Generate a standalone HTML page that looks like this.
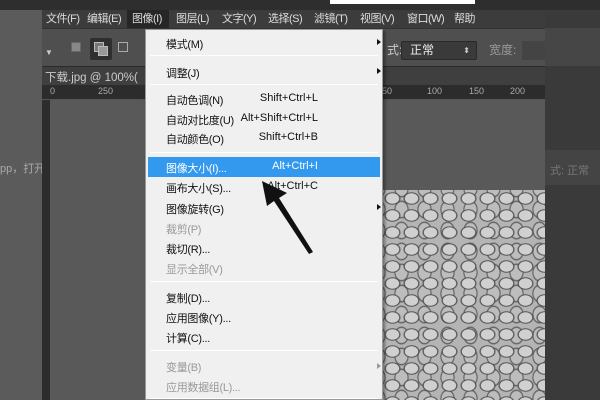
<!DOCTYPE html><html><head><meta charset="utf-8"><style>
body{margin:0;width:600px;height:400px;overflow:hidden;background:#4a4a4a;position:relative;font-family:"Liberation Sans","Noto Sans CJK SC",sans-serif;}
div{position:absolute;box-sizing:border-box}
.mi{position:absolute;left:20px;font-size:11px;color:#111;white-space:nowrap;letter-spacing:-0.3px}
.sc{position:absolute;right:64px;font-size:11px;color:#111;text-align:right;white-space:nowrap}
.dis{color:#999}
.sep{position:absolute;left:4px;right:4px;height:1px;background:#bdbdbd;border-bottom:1px solid #fff}
.ar{position:absolute;left:231px;width:0;height:0;border-left:4px solid #111;border-top:3.5px solid transparent;border-bottom:3.5px solid transparent}
.mb span{position:absolute;letter-spacing:-0.5px}
</style></head><body>
<div style="left:0;top:0;width:600px;height:10px;background:#2e2e2e"></div>
<div style="left:330px;top:0;width:145px;height:4px;background:#fff"></div>
<div style="left:0;top:10px;width:42px;height:390px;background:#5b5b5b"></div>
<div style="left:0;top:160px;font-size:11px;color:#aaa">pp，打开</div>
<div style="left:545px;top:10px;width:55px;height:390px;background:#3a3a3a"></div>
<div style="left:545px;top:28px;width:55px;height:38px;background:#464646"></div>
<div style="left:545px;top:150px;width:55px;height:35px;background:#444"></div>
<div style="left:550px;top:162px;font-size:11px;color:#777">式: 正常</div>
<div class="mb" style="left:42px;top:10px;width:503px;height:18px;background:#3c3c3c;color:#ddd;font-size:11px;line-height:18px">
<span style="left:4px">文件(F)</span><span style="left:45px">编辑(E)</span>
<span style="left:85px;top:0;width:42px;height:18px;background:#262626"></span><span style="left:90px">图像(I)</span>
<span style="left:134px">图层(L)</span><span style="left:180px">文字(Y)</span><span style="left:226px">选择(S)</span><span style="left:272px">滤镜(T)</span><span style="left:318px">视图(V)</span><span style="left:365px">窗口(W)</span><span style="left:412px">帮助</span></div>
<div style="left:42px;top:28px;width:503px;height:38px;background:#4f4f4f;border-top:1px solid #333"></div>
<div style="left:45px;top:48px;color:#ccc;font-size:8px">▼</div>
<div style="left:71px;top:42px;width:10px;height:10px;background:#888;border:1px solid #666"></div>
<div style="left:90px;top:38px;width:22px;height:22px;background:#2f2f2f;border-radius:2px"></div>
<div style="left:94px;top:42px;width:10px;height:10px;border:1px solid #bbb;background:#777"></div>
<div style="left:98px;top:46px;width:10px;height:10px;border:1px solid #bbb;background:#999"></div>
<div style="left:118px;top:42px;width:10px;height:10px;border:1px solid #aaa"></div>
<div style="left:387px;top:41px;font-size:12px;color:#ccc">式:</div>
<div style="left:401px;top:41px;width:76px;height:19px;background:#3a3a3a;border:1px solid #2a2a2a;border-radius:2px;color:#eee;font-size:12px;line-height:17px;padding-left:8px">正常<span style="position:absolute;right:6px;font-size:8px;color:#ccc">⬍</span></div>
<div style="left:489px;top:41px;font-size:12px;color:#999">宽度:</div>
<div style="left:522px;top:41px;width:23px;height:19px;background:#444"></div>
<div style="left:42px;top:66px;width:503px;height:19px;background:#3f3f3f;border-top:1px solid #2a2a2a"></div>
<div style="left:45px;top:69px;font-size:11.5px;color:#ccc">下载.jpg @ 100%(</div>
<div style="left:42px;top:85px;width:503px;height:15px;background:#2c2c2c;border-bottom:1px solid #555;color:#aaa;font-size:9px">
<span style="position:absolute;left:8px;top:1px">0</span><span style="position:absolute;left:56px;top:1px">250</span><span style="position:absolute;left:340px;top:1px">50</span><span style="position:absolute;left:385px;top:1px">100</span><span style="position:absolute;left:427px;top:1px">150</span><span style="position:absolute;left:468px;top:1px">200</span></div>
<div style="left:42px;top:100px;width:8px;height:300px;background:#2c2c2c"></div>
<div style="left:50px;top:100px;width:495px;height:300px;background:#595959"></div>
<div style="left:383px;top:190px;width:162px;height:210px;background:
radial-gradient(ellipse 9px 7px at 50% 50%,#d0d0d0 70%,#444 80%,transparent 95%) 0 0/19px 17px,
radial-gradient(ellipse 8px 10px at 50% 50%,#bdbdbd 70%,#555 82%,transparent 95%) 7px 9px/23px 21px,
#b4b4b4"></div>
<div style="left:145px;top:29px;width:238px;height:371px;background:#f0f0f0;border:1px solid #999;box-shadow:2px 2px 3px rgba(0,0,0,.4)">
<div class="mi" style="top:6px">模式(M)</div><div class="ar" style="top:9px"></div>
<div class="sep" style="top:25px"></div>
<div class="mi" style="top:35px">调整(J)</div><div class="ar" style="top:38px"></div>
<div class="sep" style="top:54px"></div>
<div class="mi" style="top:62px">自动色调(N)</div><div class="sc" style="top:62px">Shift+Ctrl+L</div>
<div class="mi" style="top:82px">自动对比度(U)</div><div class="sc" style="top:82px">Alt+Shift+Ctrl+L</div>
<div class="mi" style="top:101px">自动颜色(O)</div><div class="sc" style="top:101px">Shift+Ctrl+B</div>
<div class="sep" style="top:122px"></div>
<div style="left:2px;top:127px;width:232px;height:20px;background:#3399ee"></div>
<div class="mi" style="top:130px;color:#fff">图像大小(I)...</div><div class="sc" style="top:130px;color:#fff">Alt+Ctrl+I</div>
<div class="mi" style="top:150px">画布大小(S)...</div><div class="sc" style="top:150px">Alt+Ctrl+C</div>
<div class="mi" style="top:171px">图像旋转(G)</div><div class="ar" style="top:174px"></div>
<div class="mi dis" style="top:191px">裁剪(P)</div>
<div class="mi" style="top:211px">裁切(R)...</div>
<div class="mi dis" style="top:231px">显示全部(V)</div>
<div class="sep" style="top:251px"></div>
<div class="mi" style="top:260px">复制(D)...</div>
<div class="mi" style="top:280px">应用图像(Y)...</div>
<div class="mi" style="top:300px">计算(C)...</div>
<div class="sep" style="top:320px"></div>
<div class="mi dis" style="top:329px">变量(B)</div><div class="ar" style="top:333px;border-left-color:#999"></div>
<div class="mi dis" style="top:349px">应用数据组(L)...</div>
<div class="sep" style="top:368px"></div>
</div>
<svg style="position:absolute;left:0;top:0" width="600" height="400"><polygon points="262,181 287,193 279,198 313,252 309,254 274,201 267,206" fill="#111"/></svg>
</body></html>
